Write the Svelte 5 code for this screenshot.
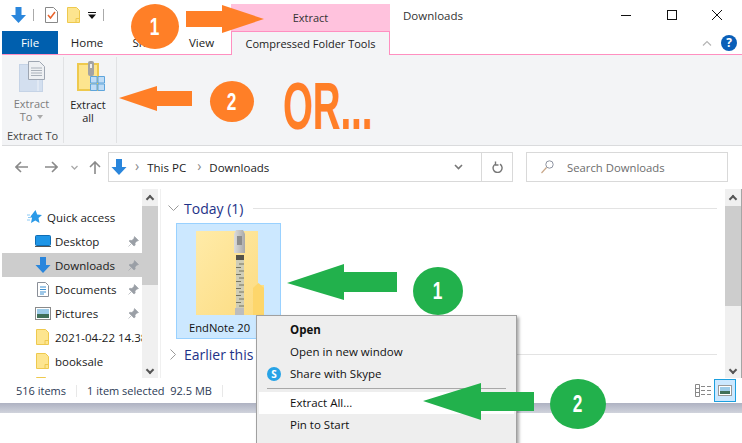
<script lang="ts">
  const tabs = ["Home", "Share", "View"];
  const navItems = [
    { label: "Desktop", icon: "desktop", pin: true },
    { label: "Downloads", icon: "down", pin: true, active: true },
    { label: "Documents", icon: "doc", pin: true },
    { label: "Pictures", icon: "pic", pin: true },
    { label: "2021-04-22 14.38.05", icon: "folder" },
    { label: "booksale", icon: "folder" },
    { label: "", icon: "folder" }
  ];
  const zipTeeth = Array.from({ length: 13 }, (_, i) => 34 + i * 3.5);
</script>

{#snippet downArrow(w: number, h: number)}
  <svg width={w} height={h} viewBox="0 0 16 16">
    <path d="M5 0h6v8h4.500L8 16 .5 8H5z" fill="#2a86dc" />
  </svg>
{/snippet}

{#snippet folderSmall()}
  <svg width="13" height="16" viewBox="0 0 13 16">
    <path d="M.5.500h9l3 3v12H.500z" fill="#fde58f" stroke="#eec94e" />
    <path d="M9 15.500v-4h3.500" fill="none" stroke="#eec94e" />
  </svg>
{/snippet}

{#snippet pin()}
  <svg class="pin" width="11" height="11" viewBox="0 0 11 11">
    <path d="M6.500.500l4 4-1.500.6-2 2 .2 2L6 10 1 5l.9-.7 2 .2 2-2zM3 8l-2.500 2.500" fill="#9a9fa6" stroke="#9a9fa6" stroke-width=".6" />
  </svg>
{/snippet}

<div class="page">
  <div class="window">
    <header class="titlebar">
      <div class="qat">
        {@render downArrow(17, 16)}
        <i class="qat-sep"></i>
        <svg width="13" height="16" viewBox="0 0 13 16">
          <path d="M.5.500h8l4 4v11H.500z" fill="#fff" stroke="#888" />
          <path d="M3 8l2.500 3L10 5" fill="none" stroke="#e8622a" stroke-width="1.500" />
        </svg>
        <svg class="qat-folder" width="13" height="16" viewBox="0 0 13 16">
          <path d="M.5.500h9l3 3v12H.500z" fill="#fde58f" stroke="#eec94e" />
          <path d="M9 15.500v-4h3.500" fill="none" stroke="#eec94e" />
        </svg>
        <svg class="qat-more" width="8" height="7" viewBox="0 0 8 7">
          <path d="M0 0h8v1H0zM0 2.500h8L4 7z" fill="#111" />
        </svg>
        <i class="qat-sep"></i>
      </div>
      <div class="context-tab">Extract</div>
      <div class="doc-title">Downloads</div>
      <div class="win-buttons">
        <svg width="12" height="12" viewBox="0 0 12 12"><path d="M1 6.500h10" stroke="#111" /></svg>
        <svg width="12" height="12" viewBox="0 0 12 12"><rect x="1.500" y="1.500" width="9" height="9" fill="none" stroke="#111" /></svg>
        <svg width="12" height="12" viewBox="0 0 12 12"><path d="M1 1l10 10M11 1L1 11" stroke="#111" /></svg>
      </div>
    </header>

    <nav class="tabs">
      <div class="tab-file">File</div>
      {#each tabs as tab}
        <div class="tab">{tab}</div>
      {/each}
      <div class="tab-active">Compressed Folder Tools</div>
      <div class="tabs-end">
        <svg width="10" height="6" viewBox="0 0 10 6"><path d="M1 5.500l4-4 4 4" fill="none" stroke="#b5b5b5" stroke-width="1.200" /></svg>
        <span class="help">?</span>
      </div>
    </nav>

    <section class="ribbon">
      <div class="ribbon-group first">
        <div class="ribbon-btn muted">
          <svg class="extract-to-icon" width="27" height="31" viewBox="0 0 27 31">
            <rect x=".5" y="3.500" width="23" height="27" fill="#d3dfef" stroke="#c5d3e6" />
            <path d="M19 4v26" stroke="#e6edf6" stroke-width="1.500" />
            <path d="M9.500.5h11l5 5v13h-16z" fill="#eef0f3" stroke="#9ea6b2" />
            <path d="M12 7h11M12 9.500h11M12 12h11M12 14.500h11" stroke="#aab1ba" />
          </svg>
          <span>Extract</span>
          <span>To <i class="caret"></i></span>
        </div>
        <div class="group-label">Extract To</div>
      </div>
      <div class="ribbon-group second">
        <div class="ribbon-btn">
          <svg class="extract-all-icon" width="28" height="32" viewBox="0 0 28 32">
            <rect x="1" y="3" width="20" height="26" fill="#fde58f" stroke="#eec94e" stroke-width="2" />
            <rect x="11" y="0" width="6" height="15" rx="2" fill="#a3a3a3" />
            <rect x="13" y="3" width="2" height="4" fill="#eee" />
            <path d="M13.500 15.500h6.500v6.500h-6.500zM21 15.500h6.500v6.500H21zM13.500 23h6.500v6.500h-6.500zM21 23h6.500v6.500H21z" fill="#c0dcf5" stroke="#5ea5dc" />
          </svg>
          <span class="dark">Extract</span>
          <span class="dark">all</span>
        </div>
      </div>
    </section>

    <div class="navbar">
      <div class="nav-arrows">
        <svg width="13" height="12" viewBox="0 0 13 12"><path d="M6 1L1 6l5 5M1 6h12" fill="none" stroke="#8a8a8a" stroke-width="1.600" /></svg>
        <svg width="13" height="12" viewBox="0 0 13 12"><path d="M7 1l5 5-5 5M12 6H0" fill="none" stroke="#8a8a8a" stroke-width="1.600" /></svg>
        <svg width="7" height="5" viewBox="0 0 7 5"><path d="M.5 1l3 3 3-3" fill="none" stroke="#aaa" stroke-width="1.300" /></svg>
        <svg width="12" height="13" viewBox="0 0 12 13"><path d="M1 6l5-5 5 5M6 1v12" fill="none" stroke="#8a8a8a" stroke-width="1.600" /></svg>
      </div>
      <div class="address">
        {@render downArrow(16, 16)}
        <span class="crumb-sep">›</span>
        <span class="crumb-this">This PC</span>
        <span class="crumb-sep">›</span>
        <span>Downloads</span>
        <svg class="addr-chevron" width="9" height="6" viewBox="0 0 9 6"><path d="M1 1l3.500 3.500L8 1" fill="none" stroke="#777" stroke-width="1.600" /></svg>
        <span class="refresh">
          <svg width="12" height="12" viewBox="0 0 12 12"><path d="M4 2.500a4.500 4.500 0 1 0 4.500.2M4 0v3.500h3" fill="none" stroke="#777" stroke-width="1.400" transform="translate(.5 .5)" /></svg>
        </span>
      </div>
      <div class="search">
        <svg width="13" height="14" viewBox="0 0 13 14">
          <circle cx="8.500" cy="4.500" r="3.700" fill="none" stroke="#8d93a0" />
          <path d="M5.500 7.500L.5 13" stroke="#c9a88a" stroke-width="1.200" />
        </svg>
        <span>Search Downloads</span>
      </div>
    </div>

    <div class="body">
      <aside class="pane">
        <div class="pane-row quick">
          <svg width="15" height="14" viewBox="0 0 15 14">
            <path d="M8.500 0l1.700 4.500L15 5l-3.500 3 1 5-4.200-2.600L4 13l1-5-1.500-1.500z" fill="#2b9ae8" />
            <path d="M0 5h3M1 7.500h3M0 10h3" stroke="#8ccaf5" />
          </svg>
          <span>Quick access</span>
        </div>
        {#each navItems as item}
          <div class="pane-row" class:active={item.active}>
            <span class="pane-icon">
              {#if item.icon === "desktop"}
                <svg width="16" height="12" viewBox="0 0 16 12">
                  <rect x=".5" y=".5" width="15" height="10" rx="1" fill="#1e95e6" stroke="#0f6db5" />
                  <path d="M0 11.500h16" stroke="#555" />
                </svg>
              {:else if item.icon === "down"}
                {@render downArrow(16, 16)}
              {:else if item.icon === "doc"}
                <svg width="12" height="15" viewBox="0 0 12 15">
                  <path d="M.5.500h8l3 3v11H.500z" fill="#fff" stroke="#8a8f98" />
                  <path d="M3 5h6M3 7.500h6M3 10h6M3 12h4" stroke="#3c8fd0" />
                </svg>
              {:else if item.icon === "pic"}
                <svg width="16" height="13" viewBox="0 0 16 13">
                  <rect x=".5" y=".5" width="15" height="12" fill="#fff" stroke="#8a8a8a" />
                  <rect x="2" y="2" width="12" height="5" fill="#9ccbe8" />
                  <rect x="2" y="7" width="12" height="4" fill="#3f6f58" />
                </svg>
              {:else}
                {@render folderSmall()}
              {/if}
            </span>
            <span class="pane-text">{item.label}</span>
            {#if item.pin}
              {@render pin()}
            {/if}
          </div>
        {/each}
      </aside>

      <div class="scrollbar pane-scroll">
        <span class="sb-up"></span>
        <span class="thumb"></span>
        <span class="sb-down"></span>
      </div>

      <main class="content">
        <div class="group-head">
          <svg width="11" height="7" viewBox="0 0 11 7"><path d="M.5.500l5 5 5-5" fill="none" stroke="#9a9a9a" /></svg>
          <span>Today (1)</span>
          <i class="rule"></i>
        </div>
        <div class="file-tile">
          <svg width="70" height="86" viewBox="0 0 70 86">
            <defs>
              <linearGradient id="fold" x1="0" y1="0" x2="1" y2="1">
                <stop offset="0" stop-color="#ffeba8" />
                <stop offset="1" stop-color="#fcdb80" />
              </linearGradient>
              <linearGradient id="pull" x1="0" y1="0" x2="1" y2="0">
                <stop offset="0" stop-color="#dcdcdc" />
                <stop offset="1" stop-color="#a9a9a9" />
              </linearGradient>
            </defs>
            <path d="M1 1h62v54h6v30H1z" fill="url(#fold)" />
            <path d="M58 85V58l5.500-5 5.500 5v27z" fill="#fdd66b" />
            <path d="M41 0h7l2 4v19H39V4z" fill="url(#pull)" />
            <rect x="42" y="6" width="5" height="9" fill="#8d8d8d" />
            <rect x="41" y="25" width="8" height="5" fill="#55534a" />
            <rect x="41" y="30" width="8" height="48" fill="#cfcdb8" />
            {#each zipTeeth as y, i}
              <path d={`M${i % 2 ? 41 : 44} ${y}h5`} stroke="#77755f" />
            {/each}
            <rect x="40" y="78" width="9" height="7" fill="#bdbdbd" />
          </svg>
          <span class="file-name">EndNote 20</span>
        </div>
        <div class="group-head earlier">
          <svg width="7" height="11" viewBox="0 0 7 11"><path d="M.5.500l5 5-5 5" fill="none" stroke="#9a9a9a" /></svg>
          <span>Earlier this month (515)</span>
          <i class="rule"></i>
        </div>
      </main>

      <div class="scrollbar main-scroll">
        <span class="sb-up"></span>
        <span class="thumb"></span>
        <span class="sb-down"></span>
      </div>
    </div>

    <footer class="status">
      <span>516 items</span>
      <i class="status-sep"></i>
      <span>1 item selected&nbsp; 92.5 MB</span>
      <i class="status-sep"></i>
      <div class="view-btns">
        <svg width="17" height="13" viewBox="0 0 17 13">
          <path d="M.5.500h4v12h-4zM.5 4.500h4M.5 8.500h4M6 2.500h4M12 2.500h4M6 6.500h4M12 6.500h4M6 10.500h4M12 10.500h4" fill="none" stroke="#888" />
        </svg>
        <span class="view-on">
          <svg width="14" height="11" viewBox="0 0 14 11">
            <rect x=".5" y=".5" width="13" height="10" fill="#fff" stroke="#999" />
            <rect x="2" y="2" width="10" height="4" fill="#9ccbe8" />
            <rect x="2" y="6" width="10" height="3" fill="#3f6f58" />
          </svg>
        </span>
      </div>
    </footer>
  </div>
  <div class="shadow"></div>

  <div class="menu">
    <div class="menu-item strong">Open</div>
    <div class="menu-item">Open in new window</div>
    <div class="menu-item">
      <span class="skype">S</span>
      Share with Skype
    </div>
    <i class="menu-sep"></i>
    <div class="menu-item hover">Extract All...</div>
    <div class="menu-item">Pin to Start</div>
  </div>

  <div class="marks">
    <svg class="mark" style="left:186px;top:5px" width="79" height="29" viewBox="0 0 79 29"><path d="M0 6h36V0l42 14-42 14v-6H0z" fill="#ff7f27" /></svg>
    <svg class="mark" style="left:119px;top:86px" width="73" height="26" viewBox="0 0 73 26"><path d="M73 5H38V0L0 12l38 13v-5h35z" fill="#ff7f27" /></svg>
    <svg class="mark" style="left:287px;top:264px" width="110" height="37" viewBox="0 0 110 37"><path d="M110 8H57V0L0 19l57 17v-8h53z" fill="#22b14c" /></svg>
    <svg class="mark" style="left:423px;top:383px" width="111" height="37" viewBox="0 0 111 37"><path d="M111 9H58V0L0 18l58 19v-9h53z" fill="#22b14c" /></svg>
    <span class="badge orange" style="left:131px;top:4px;width:48px;height:45px"><b>1</b></span>
    <span class="badge orange" style="left:210px;top:81px;width:44px;height:41px"><b>2</b></span>
    <span class="badge green" style="left:413px;top:267px;width:50px;height:48px"><b>1</b></span>
    <span class="badge green" style="left:550px;top:379px;width:56px;height:50px"><b>2</b></span>
    <span class="or">OR...</span>
  </div>
</div>

<style>
  :global(body) {
    margin: 0;
    background: #fff;
  }
  .page {
    position: relative;
    width: 742px;
    height: 443px;
    overflow: hidden;
    font-family: "Open Sans", "Noto Sans", sans-serif;
    font-size: 11.500px;
    color: #1a1a1a;
    background: #fff;
  }
  .window {
    display: flex;
    flex-direction: column;
    height: 403px;
    padding-left: 2px;
    box-sizing: border-box;
    background: #fff;
  }
  .shadow {
    height: 10px;
    background: linear-gradient(#aeb2c2, #d0d3dc);
  }

  .titlebar {
    display: flex;
    height: 31px;
    flex: none;
  }
  .qat {
    display: flex;
    align-items: center;
    gap: 6px;
    width: 229px;
    padding: 0 0 1px 8px;
    box-sizing: border-box;
  }
  .qat-sep {
    width: 1px;
    height: 12px;
    background: #aaa;
    margin-right: 5px;
  }
  .qat-folder {
    margin-left: 3px;
  }
  .qat-more {
    margin: 0 1px 0 2px;
  }
  .context-tab {
    width: 159px;
    margin-top: 4px;
    background: #ffc2dd;
    text-align: center;
    line-height: 27px;
    font-size: 11px;
    color: #333;
  }
  .doc-title {
    margin-left: 13px;
    line-height: 32px;
    color: #333;
    font-size: 11.500px;
  }
  .win-buttons {
    display: flex;
    align-items: center;
    gap: 33.500px;
    margin-left: auto;
    padding-right: 19px;
    height: 30px;
  }

  .tabs {
    display: flex;
    height: 24px;
    flex: none;
    box-sizing: border-box;
    border-bottom: 1px solid #ff8fc0;
    font-size: 11.500px;
    color: #222;
    line-height: 23px;
  }
  .tab-file {
    width: 56px;
    background: #005fae;
    color: #fff;
    text-align: center;
  }
  .tab {
    width: 58px;
    text-align: center;
  }
  .tab:nth-of-type(3) {
    width: 64px;
  }
  .tab:nth-of-type(4) {
    width: 43px;
  }
  .tab-active {
    width: 159px;
    height: 24px;
    margin-left: 8px;
    box-sizing: border-box;
    border: 1px solid #ff8fc0;
    border-bottom: 0;
    background: #f3f4f6;
    text-align: center;
    position: relative;
    font-size: 11px;
  }
  .tabs-end {
    display: flex;
    align-items: center;
    gap: 9px;
    margin-left: auto;
    padding-right: 5px;
  }
  .help {
    width: 16px;
    height: 16px;
    border-radius: 50%;
    background: #0a5fb8;
    color: #fff;
    font-weight: 700;
    font-size: 12px;
    line-height: 16px;
    text-align: center;
  }

  .ribbon {
    display: flex;
    height: 91px;
    flex: none;
    padding-top: 2px;
    box-sizing: border-box;
    background: #f3f4f6;
    border-bottom: 1px solid #dadbdd;
  }
  .ribbon-group {
    height: 86px;
    border-right: 1px solid #e1e2e4;
    box-sizing: border-box;
    position: relative;
  }
  .first {
    width: 62px;
  }
  .second {
    width: 53px;
  }
  .second .ribbon-btn {
    padding-right: 4px;
  }
  .ribbon-btn {
    display: flex;
    flex-direction: column;
    align-items: center;
    line-height: 13px;
    font-size: 11px;
    padding-top: 4px;
  }
  .ribbon-btn svg {
    margin-bottom: 5px;
  }
  .extract-to-icon {
    margin-left: 2px;
  }
  .extract-all-icon {
    margin-left: 5px;
  }
  .muted {
    color: #7d7d7d;
    padding-right: 2px;
  }
  .dark {
    color: #222;
  }
  .caret {
    display: inline-block;
    border: 3.500px solid transparent;
    border-top: 4px solid #aaa;
    border-bottom: 0;
    vertical-align: 2px;
    margin-left: 2px;
  }
  .group-label {
    text-align: center;
    font-size: 11px;
    line-height: 14px;
    margin-top: 6px;
    color: #444;
  }

  .navbar {
    display: flex;
    height: 43px;
    flex: none;
    box-sizing: border-box;
    padding-top: 6px;
    align-items: flex-start;
  }
  .nav-arrows {
    display: flex;
    align-items: center;
    gap: 11px;
    width: 106px;
    height: 30px;
    padding-left: 13px;
    box-sizing: border-box;
  }
  .nav-arrows svg:nth-child(2) {
    margin-left: 6px;
  }
  .nav-arrows svg:nth-child(3) {
    margin-left: 2px;
  }
  .address {
    display: flex;
    align-items: center;
    width: 405px;
    height: 30px;
    box-sizing: border-box;
    border: 1px solid #d9d9d9;
    padding-left: 2px;
    gap: 8px;
    font-size: 11.500px;
    color: #222;
  }
  .crumb-sep {
    color: #888;
    font-size: 14px;
    line-height: 14px;
    margin-bottom: 2px;
  }
  .crumb-this {
    margin-right: 3px;
  }
  .addr-chevron {
    margin-left: auto;
    margin-right: 10px;
  }
  .refresh {
    display: flex;
    align-items: center;
    justify-content: center;
    width: 30px;
    height: 28px;
    border-left: 1px solid #d9d9d9;
  }
  .search {
    display: flex;
    align-items: center;
    gap: 13px;
    width: 202px;
    height: 30px;
    margin-left: 13px;
    padding-left: 14px;
    box-sizing: border-box;
    border: 1px solid #d9d9d9;
    color: #6d6d6d;
    font-size: 11.300px;
  }

  .body {
    display: flex;
    flex: 1;
    min-height: 0;
    border-right: 1px solid #a5a5a5;
  }
  .pane {
    width: 140px;
    padding-top: 16px;
    flex: none;
    overflow: hidden;
  }
  .pane-row {
    display: flex;
    align-items: center;
    height: 24px;
    white-space: nowrap;
    padding-left: 30px;
  }
  .quick {
    padding-left: 25px;
    gap: 5px;
  }
  .pane-icon {
    width: 21px;
    display: flex;
    justify-content: center;
    flex: none;
    margin-right: 2px;
  }
  .pane-text {
    flex: 1;
    min-width: 0;
    overflow: hidden;
  }
  .pin {
    margin: 0 3px 0 4px;
    flex: none;
  }
  .active {
    background: #cdcdcd;
  }
  .scrollbar {
    display: flex;
    flex-direction: column;
    width: 16px;
    flex: none;
    background: #f0f0f0;
    box-sizing: border-box;
    padding-top: 17px;
    position: relative;
  }
  .thumb {
    display: block;
    background: #cdcdcd;
  }
  .pane-scroll .thumb {
    height: 79px;
  }
  .main-scroll .thumb {
    height: 100px;
  }
  .sb-up,
  .sb-down {
    position: absolute;
    left: 5px;
    width: 6px;
    height: 6px;
    border-left: 2px solid #555;
    border-top: 2px solid #555;
    box-sizing: border-box;
  }
  .sb-up {
    top: 7px;
    transform: rotate(45deg);
  }
  .sb-down {
    bottom: 5px;
    transform: rotate(225deg);
  }
  .content {
    flex: 1;
    min-width: 0;
    margin-left: 2px;
    border-left: 1px solid #f0f0f0;
    padding: 7px 8px 0 7px;
    overflow: hidden;
  }
  .group-head {
    display: flex;
    align-items: center;
    height: 24px;
    gap: 5px;
    color: #1e3287;
    font-size: 14px;
    white-space: nowrap;
  }
  .rule {
    flex: 1;
    height: 1px;
    background: #e3e3e3;
    margin-left: 5px;
  }
  .earlier {
    margin-top: 3px;
    gap: 7px;
    margin-left: 2px;
  }
  .file-tile {
    display: flex;
    flex-direction: column;
    width: 105px;
    height: 116px;
    box-sizing: border-box;
    margin: 3px 0 0 8px;
    padding-top: 6px;
    border: 1px solid #99d1ff;
    background: #cce8ff;
  }
  .file-tile svg {
    flex: none;
    margin-left: 18px;
  }
  .file-name {
    margin-top: 4px;
    padding-left: 12px;
    font-size: 11.200px;
    color: #111;
  }

  .status {
    display: flex;
    align-items: center;
    height: 25px;
    flex: none;
    padding-left: 14px;
    font-size: 11px;
    color: #2b3a55;
    gap: 10px;
  }
  .status-sep {
    width: 1px;
    height: 12px;
    background: #e8e8e8;
  }
  .view-btns {
    display: flex;
    align-items: center;
    gap: 2px;
    margin-left: auto;
    padding-right: 6px;
  }
  .view-on {
    display: flex;
    align-items: center;
    justify-content: center;
    width: 22px;
    height: 23px;
    box-sizing: border-box;
    border: 1px solid #1c9fde;
    background: #cce8ff;
  }

  .menu {
    position: absolute;
    left: 256px;
    top: 315px;
    width: 261px;
    height: 140px;
    box-sizing: border-box;
    padding: 2px;
    border: 1px solid #a0a0a0;
    background: #eeeeee;
    box-shadow: 2px 2px 3px rgba(0, 0, 0, 0.35);
    font-size: 11.500px;
    color: #111;
  }
  .menu-item {
    position: relative;
    height: 22px;
    line-height: 21px;
    padding-left: 31px;
  }
  .menu-item:first-child {
    margin-top: 1px;
  }
  .strong {
    font-weight: 700;
  }
  .hover {
    background: #fff;
  }
  .menu-sep {
    display: block;
    height: 1px;
    margin: 3px 8px 3px 8px;
    background: #a8a8a8;
  }
  .skype {
    position: absolute;
    left: 8px;
    top: 4px;
    width: 14px;
    height: 14px;
    border-radius: 50%;
    background: #27a3e6;
    color: #fff;
    font-size: 10px;
    font-weight: 700;
    line-height: 14px;
    text-align: center;
  }

  .marks {
    position: absolute;
    inset: 0;
    pointer-events: none;
  }
  .mark {
    position: absolute;
  }
  .badge {
    position: absolute;
    display: flex;
    align-items: center;
    justify-content: center;
    border-radius: 50%;
    color: #fff;
    font-family: "Liberation Sans", sans-serif;
    font-size: 24px;
  }
  .badge b {
    display: inline-block;
    transform: scaleX(0.72);
  }
  .orange {
    background: #ff7f27;
  }
  .green {
    background: #22b14c;
  }
  .or {
    position: absolute;
    left: 283px;
    top: 70px;
    font-family: "Liberation Sans", sans-serif;
    font-weight: 700;
    font-size: 66px;
    line-height: 72px;
    color: #ff7f27;
    text-shadow: 1px 0 #ffc2dd;
    transform: scaleX(0.58);
    transform-origin: left center;
  }
</style>
